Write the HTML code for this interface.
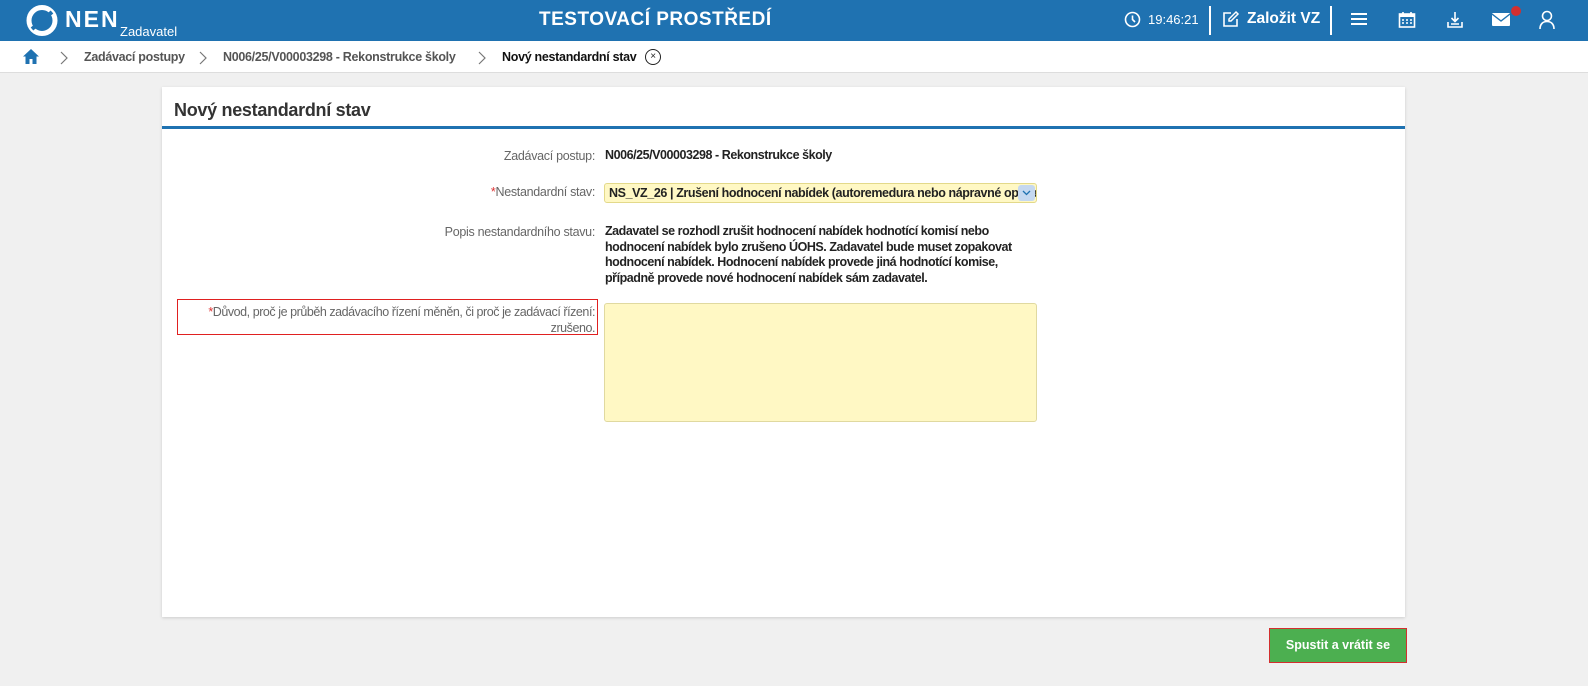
<!DOCTYPE html>
<html><head><meta charset="utf-8"><style>
*{box-sizing:border-box;margin:0;padding:0}
body{width:1588px;height:686px;background:#f0f0f0;font-family:"Liberation Sans",sans-serif;position:relative;overflow:hidden;color:#222}
.hdr{position:absolute;left:0;top:0;width:1588px;height:41px;background:#1f72b1;color:#fff}
.abs{position:absolute;white-space:nowrap}
.bc{position:absolute;top:41px;left:0;width:1588px;height:32px;background:#fff;border-bottom:1px solid #ddd;font-size:12.5px;letter-spacing:-0.3px}
.card{position:absolute;left:162px;top:87px;width:1243px;height:530px;background:#fff;box-shadow:0 1px 3px rgba(0,0,0,.15)}
.lbl{position:absolute;right:810px;font-size:12.5px;color:#666;letter-spacing:-0.3px;text-align:right;white-space:nowrap}
.val{position:absolute;left:443px;font-size:12.5px;font-weight:bold;color:#222;letter-spacing:-0.45px;white-space:nowrap;line-height:15.5px}
.req{color:#d33}
</style></head><body>
<div class="hdr">
 <svg class="abs" style="left:26px;top:5px" width="32" height="31" viewBox="0 0 32 31"><circle cx="16" cy="15.5" r="13" fill="none" stroke="#fff" stroke-width="5"/><path d="M6 24 L26 7" stroke="#1f72b1" stroke-width="4"/></svg>
 <div class="abs" style="left:65px;top:6px;font-size:23px;font-weight:bold;letter-spacing:2px">NEN</div>
 <div class="abs" style="left:120px;top:24px;font-size:13px">Zadavatel</div>
 <div class="abs" style="left:539px;top:9px;font-size:19px;font-weight:bold;letter-spacing:0.5px">TESTOVACÍ PROSTŘEDÍ</div>
 <svg class="abs" style="left:1124px;top:11px" width="17" height="17" viewBox="0 0 17 17"><circle cx="8.5" cy="8.5" r="7" fill="none" stroke="#fff" stroke-width="1.6"/><path d="M8.5 4.5V8.5L11 11" stroke="#fff" stroke-width="1.6" fill="none"/></svg>
 <div class="abs" style="left:1148px;top:12px;font-size:13px">19:46:21</div>
 <div class="abs" style="left:1209px;top:6px;width:2px;height:29px;background:#fff"></div>
 <svg class="abs" style="left:1222px;top:10px" width="18" height="18" viewBox="0 0 18 18"><path d="M9 3H2V16H15V9" fill="none" stroke="#fff" stroke-width="1.6"/><path d="M14 2L16 4L9 11H7V9Z" fill="none" stroke="#fff" stroke-width="1.5"/></svg>
 <div class="abs" style="left:1247px;top:10px;font-size:15.5px;font-weight:bold">Založit VZ</div>
 <div class="abs" style="left:1330px;top:6px;width:2px;height:29px;background:#fff"></div>
 <div class="abs" style="left:1351px;top:13px;width:16px;height:2px;background:#fff;box-shadow:0 5px 0 #fff,0 10px 0 #fff"></div>
 <svg class="abs" style="left:1398px;top:11px" width="18" height="18" viewBox="0 0 18 18"><rect x="1.5" y="3" width="15" height="13" fill="none" stroke="#fff" stroke-width="1.6"/><rect x="1.5" y="3" width="15" height="3" fill="#fff"/><path d="M5 1V4M13 1V4" stroke="#fff" stroke-width="1.6"/><path d="M4 9h2M8 9h2M12 9h2M4 12h2M8 12h2M12 12h2" stroke="#fff" stroke-width="1.5"/></svg>
 <svg class="abs" style="left:1446px;top:11px" width="18" height="18" viewBox="0 0 18 18"><path d="M9 1V10M5.5 7L9 10.5L12.5 7" fill="none" stroke="#fff" stroke-width="1.6"/><path d="M2 11V16H16V11M5 13H13" fill="none" stroke="#fff" stroke-width="1.6"/></svg>
 <svg class="abs" style="left:1492px;top:13px" width="18" height="14" viewBox="0 0 18 14"><rect x="0" y="0" width="18" height="13" rx="1" fill="#fff"/><path d="M0 1L9 8L18 1" fill="none" stroke="#1f72b1" stroke-width="1.4"/></svg>
 <div class="abs" style="left:1511px;top:6px;width:10px;height:10px;border-radius:50%;background:#d32f2f"></div>
 <svg class="abs" style="left:1538px;top:10px" width="18" height="20" viewBox="0 0 18 20"><circle cx="9" cy="6" r="4.5" fill="none" stroke="#fff" stroke-width="1.6"/><path d="M2 19C2 14 5 11.5 9 11.5S16 14 16 19" fill="none" stroke="#fff" stroke-width="1.6"/></svg>
</div>
<div class="bc">
 <svg class="abs" style="left:22px;top:7px" width="18" height="17" viewBox="0 0 18 17"><path d="M9 1L1 8.5H3.5V16H7.5V11H10.5V16H14.5V8.5H17Z" fill="#1f72b1"/></svg>
 <svg class="abs" style="left:60px;top:10px" width="8" height="14" viewBox="0 0 8 14"><path d="M1 1L7 7L1 13" fill="none" stroke="#777" stroke-width="1.2"/></svg>
 <div class="abs" style="left:84px;top:9px;color:#555;font-weight:bold">Zadávací postupy</div>
 <svg class="abs" style="left:199px;top:10px" width="8" height="14" viewBox="0 0 8 14"><path d="M1 1L7 7L1 13" fill="none" stroke="#777" stroke-width="1.2"/></svg>
 <div class="abs" style="left:223px;top:9px;color:#555;font-weight:bold">N006/25/V00003298 - Rekonstrukce školy</div>
 <svg class="abs" style="left:478px;top:10px" width="8" height="14" viewBox="0 0 8 14"><path d="M1 1L7 7L1 13" fill="none" stroke="#777" stroke-width="1.2"/></svg>
 <div class="abs" style="left:502px;top:9px;color:#111;font-weight:bold">Nový nestandardní stav</div>
 <div class="abs" style="left:645px;top:8px;width:16px;height:16px;border:1.3px solid #222;border-radius:50%;font-size:10px;text-align:center;line-height:13px">×</div>
</div>
<div class="card">
 <div class="abs" style="left:12px;top:13px;font-size:18px;font-weight:bold;color:#333;letter-spacing:-0.3px">Nový nestandardní stav</div>
 <div class="abs" style="left:0;top:39px;width:1243px;height:3px;background:#1f72b1"></div>
 <div class="lbl" style="top:62px">Zadávací postup:</div>
 <div class="val" style="top:61px">N006/25/V00003298 - Rekonstrukce školy</div>
 <div class="lbl" style="top:98px"><span class="req">*</span>Nestandardní stav:</div>
 <div class="abs" style="left:442px;top:96px;width:433px;height:20px;background:#fff8c4;border:1px solid #e3d98a;border-radius:3px;overflow:hidden">
  <div class="abs" style="left:4px;top:2px;font-size:12.5px;font-weight:bold;letter-spacing:-0.4px">NS_VZ_26 | Zrušení hodnocení nabídek (autoremedura nebo nápravné opatření)</div>
  <div class="abs" style="right:1px;top:1px;width:17px;height:16px;background:#c5d8f0;border-radius:3px"><svg width="17" height="16" viewBox="0 0 17 16"><path d="M5 6L8.5 9.5L12 6" fill="none" stroke="#1f72b1" stroke-width="1.3"/></svg></div>
 </div>
 <div class="lbl" style="top:138px">Popis nestandardního stavu:</div>
 <div class="val" style="top:137px">Zadavatel se rozhodl zrušit hodnocení nabídek hodnotící komisí nebo<br>hodnocení nabídek bylo zrušeno ÚOHS. Zadavatel bude muset zopakovat<br>hodnocení nabídek. Hodnocení nabídek provede jiná hodnotící komise,<br>případně provede nové hodnocení nabídek sám zadavatel.</div>
 <div class="abs" style="left:15px;top:212px;width:421px;height:36px;border:1px solid #e02020"></div>
 <div class="lbl" style="top:217px;line-height:16px;letter-spacing:-0.45px"><span class="req">*</span>Důvod, proč je průběh zadávacího řízení měněn, či proč je zadávací řízení:<br>zrušeno.</div>
 <div class="abs" style="left:442px;top:216px;width:433px;height:119px;background:#fff8c4;border:1px solid #e0d9a0;border-radius:3px"></div>
</div>
<div class="abs" style="left:1269px;top:628px;width:138px;height:35px;background:#4caf50;border:1px solid #d32f2f;color:#fff;font-size:12.5px;font-weight:bold;text-align:center;line-height:33px">Spustit a vrátit se</div>
</body></html>
